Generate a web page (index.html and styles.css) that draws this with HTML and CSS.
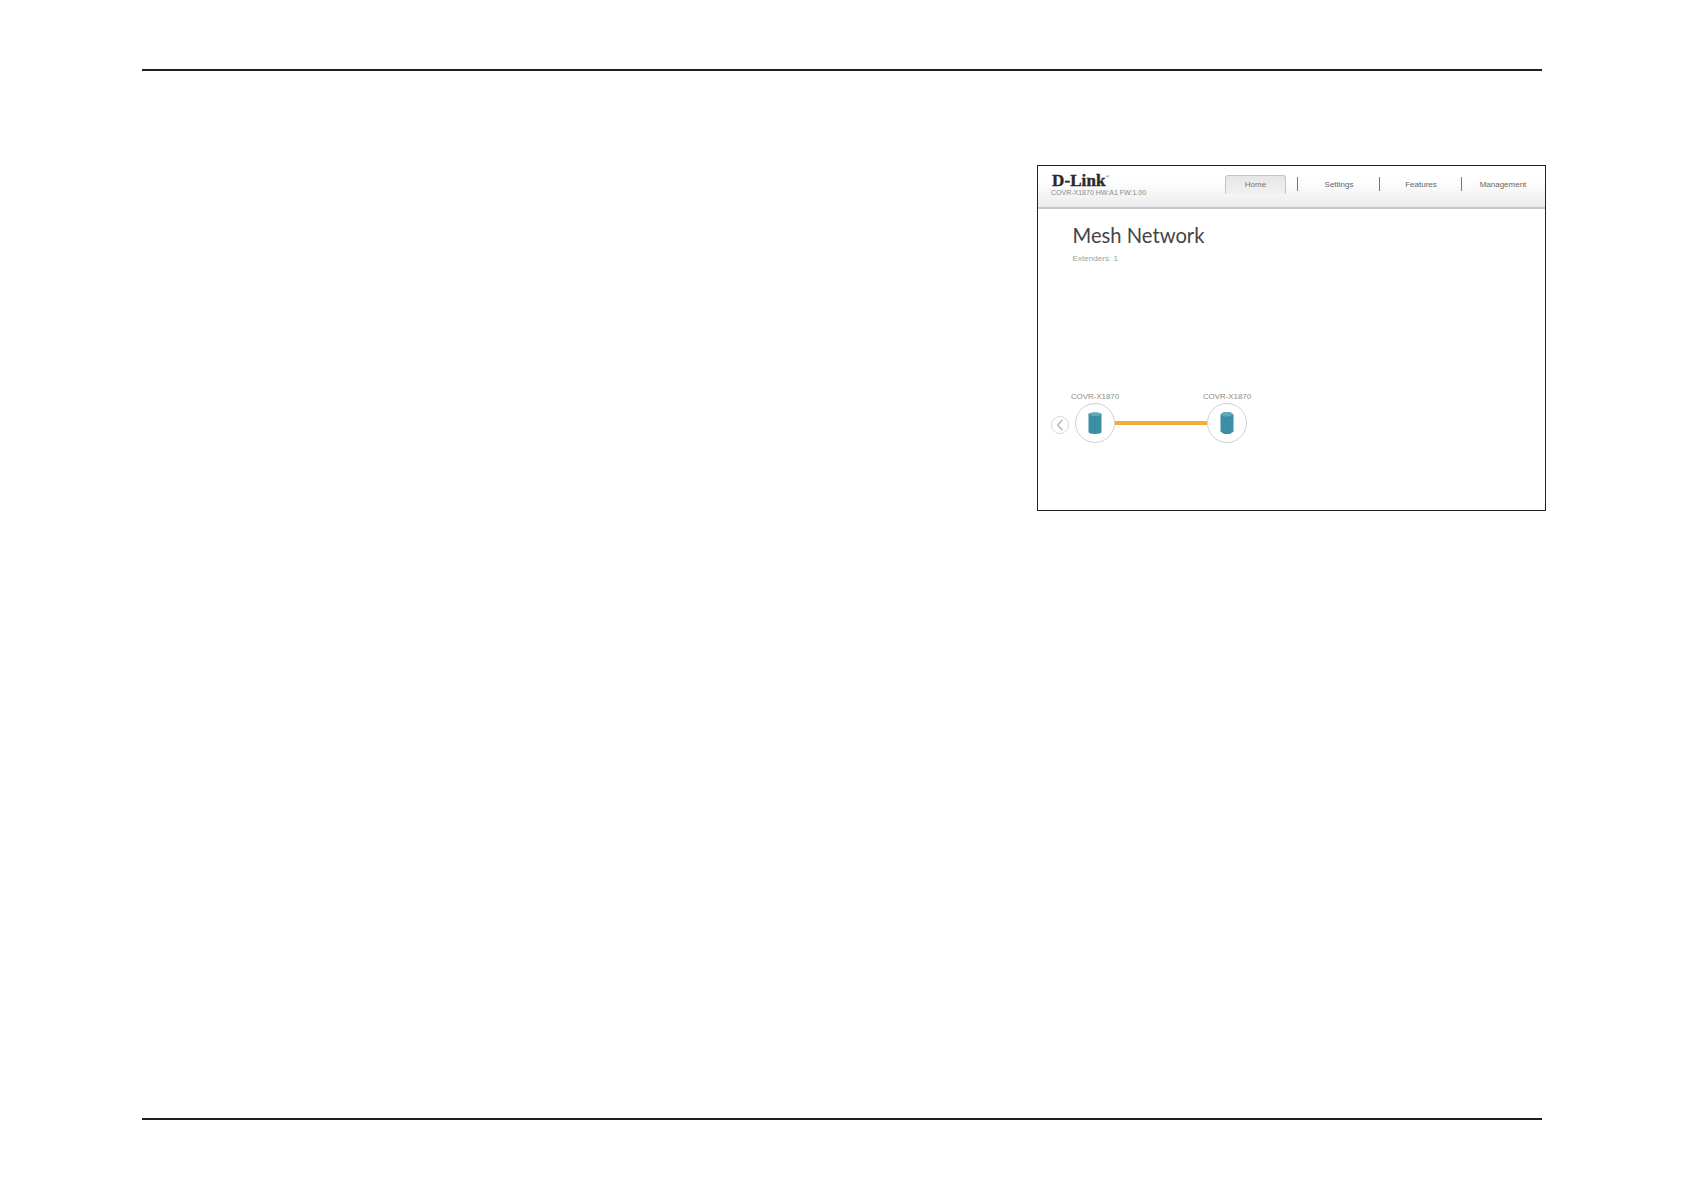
FILE: index.html
```html
<!DOCTYPE html>
<html lang="en">
<head>
<meta charset="utf-8">
<title>Mesh Network</title>
<link rel="stylesheet" href="styles.css">
</head>
<body>
<div class="page">
  <hr class="rule">
  <div class="content">
    <figure class="shot">
      <header class="bar">
        <div class="brand">
          <div class="logo">D-Link<span class="reg">®</span></div>
          <div class="model">COVR-X1870 HW:A1 FW:1.00</div>
        </div>
        <nav class="nav">
          <a class="tab active">Home</a>
          <span class="sep"></span>
          <a class="tab">Settings</a>
          <span class="sep"></span>
          <a class="tab">Features</a>
          <span class="sep"></span>
          <a class="tab">Management</a>
        </nav>
      </header>
      <main class="main">
        <h1 class="title">Mesh Network</h1>
        <p class="count">Extenders: 1</p>
        <div class="mesh">
          <button class="back" aria-label="Back">
            <svg width="8" height="12" viewBox="0 0 8 12"><path d="M6.5 1 L1.5 6 L6.5 11" fill="none" stroke="#a9a9a9" stroke-width="1.1"/></svg>
          </button>
          <div class="node">
            <span class="label">COVR-X1870</span>
            <span class="circle">
              <svg width="16" height="24" viewBox="0 0 16 24"><path d="M1.5 3.2 C1.5 0.8 14.5 0.8 14.5 3.2 L14.5 21 C14.5 23.6 1.5 23.6 1.5 21 Z" fill="#3b8fa6"/><ellipse cx="8" cy="3.2" rx="6" ry="1.7" fill="#5fa9bb"/><path d="M8 5 V23" stroke="#348299" stroke-width="0.6" opacity="0.5"/></svg>
            </span>
          </div>
          <span class="link"></span>
          <div class="node">
            <span class="label">COVR-X1870</span>
            <span class="circle">
              <svg width="16" height="24" viewBox="0 0 16 24"><path d="M1.5 3.5 L5 1 L11 1 L14.5 3.5 L14.5 20.5 L11 23 L5 23 L1.5 20.5 Z" fill="#3b8fa6"/><path d="M1.5 3.5 L5 1 L11 1 L14.5 3.5 L10 5.5 L5 5.5 Z" fill="#5fa9bb"/><path d="M8 6 V23" stroke="#348299" stroke-width="0.6" opacity="0.5"/></svg>
            </span>
          </div>
        </div>
      </main>
    </figure>
  </div>
  <hr class="rule rule-bottom">
</div>
</body>
</html>
```
FILE: styles.css
```css
* { box-sizing: border-box; }
html, body { margin: 0; padding: 0; background: #fff; }
body { font-family: "Liberation Sans", Arial, sans-serif; }

.page {
  width: 1684px;
  height: 1190px;
  padding: 69px 142px 0;
  display: flex;
  flex-direction: column;
}
.rule {
  margin: 0;
  border: 0;
  height: 2px;
  background: #1f1f1f;
  flex: none;
}
.content {
  height: 1047px;
  flex: none;
  padding-top: 94px;
  display: flex;
  justify-content: flex-end;
  margin-right: -4px;
}
.shot {
  margin: 0;
  width: 509px;
  height: 346px;
  border: 1.5px solid #222;
  background: #fff;
  display: flex;
  flex-direction: column;
}

.bar {
  height: 43px;
  flex: none;
  display: flex;
  justify-content: space-between;
  padding: 7px 7px 0 13px;
  background: linear-gradient(#fff 0%, #fff 35%, #ececec 100%);
  border-bottom: 2px solid #c6c6c6;
}
.logo {
  font-family: "Liberation Serif", serif;
  font-weight: 700;
  font-size: 17px;
  line-height: 15px;
  color: #2a2a2a;
  padding-left: 1px;
  letter-spacing: 0.1px;
  -webkit-text-stroke: 0.4px #2a2a2a;
}
.reg { font-size: 5px; vertical-align: top; font-weight: 400; line-height: 8px; -webkit-text-stroke: 0; }
.model {
  font-size: 7px;
  line-height: 8px;
  color: #8a8a8a;
  margin-top: 1px;
  white-space: nowrap;
}
.nav {
  display: flex;
  align-items: flex-start;
  padding-top: 2px;
  font-size: 8px;
  color: #666;
}
.tab {
  height: 19px;
  line-height: 20px;
  width: 70px;
  text-align: center;
  white-space: nowrap;
}
.tab.active {
  width: 61px;
  line-height: 18px;
  border: 1px solid #c4c4c4;
  border-bottom: 0;
  border-radius: 3px 3px 0 0;
  background: linear-gradient(#e6e6e6, #f1f1f1);
  color: #777;
  margin-right: 6px;
}
.sep {
  width: 1px;
  height: 14px;
  margin: 2px 6px 0 5px;
  background: #777;
}

.main {
  flex: 1;
  padding: 12px 0 0 34.5px;
}
.title {
  margin: 0;
  font-family: "Lato", "Open Sans", sans-serif;
  font-weight: 400;
  font-size: 20.2px;
  line-height: 29px;
  color: #444;
}
.count {
  margin: 3px 0 0;
  font-size: 8.1px;
  line-height: 11px;
  color: #a0a0a0;
}
.mesh {
  margin: 127px 0 0 -21.5px;
  display: flex;
  align-items: flex-end;
}
.back {
  width: 18px;
  height: 18px;
  padding: 0;
  margin: 0 6px 9px 0;
  border: 1px solid #d8d8d8;
  border-radius: 50%;
  background: #fff;
  display: flex;
  align-items: center;
  justify-content: center;
}
.node {
  width: 40px;
  display: flex;
  flex-direction: column;
  align-items: center;
}
.label {
  font-size: 7.9px;
  line-height: 11px;
  color: #8c8c8c;
  white-space: nowrap;
  margin-bottom: 1px;
}
.circle {
  width: 40px;
  height: 40px;
  border: 1.5px solid #d2d2d2;
  border-radius: 50%;
  background: #fff;
  display: flex;
  align-items: center;
  justify-content: center;
}
.link {
  width: 92px;
  height: 4px;
  margin-bottom: 18px;
  background: #f4ab3a;
}
```
